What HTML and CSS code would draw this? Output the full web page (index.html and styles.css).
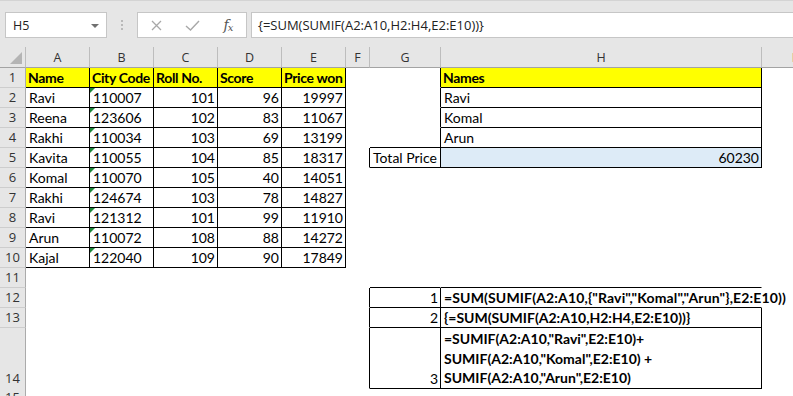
FILE: index.html
```html
<!DOCTYPE html>
<html lang="en">
<head>
    <meta charset="UTF-8">
    <title>SUMIF with multiple criteria</title>
    <link rel="stylesheet" href="styles.css">
</head>
<body>
    <!-- Formula bar -->
    <div class="toolbar">
        <div class="namebox">
            <span>H5</span>
            <svg class="caret" width="8" height="4" viewBox="0 0 8 4"><path d="M0 0h8L4 4z" fill="#707070"/></svg>
        </div>
        <div class="grip"><i></i><i></i><i></i></div>
        <div class="fxbox">
            <span class="slot">
                <svg width="11" height="11" viewBox="0 0 11 11"><path d="M1 1l9 9M10 1l-9 9" stroke="#a8a8a8" stroke-width="1.3" fill="none"/></svg>
            </span>
            <span class="slot">
                <svg width="15" height="11" viewBox="0 0 15 11"><path d="M1 6l4.5 4L14 1" stroke="#a8a8a8" stroke-width="1.4" fill="none"/></svg>
            </span>
            <span class="slot fx"><i>f<sub>x</sub></i></span>
        </div>
        <div class="formula">{=SUM(SUMIF(A2:A10,H2:H4,E2:E10))}</div>
    </div>

    <!-- Sheet -->
    <div class="sheet">
        <div class="row colhead">
            <div class="corner"></div>
            <div class="ch">A</div><div class="ch">B</div><div class="ch">C</div><div class="ch">D</div><div class="ch">E</div>
            <div class="ch">F</div><div class="ch">G</div><div class="ch">H</div><div class="ch">I</div>
        </div>

        <div class="row">
            <div class="rh">1</div>
            <div class="c b y h">Name</div><div class="c b y h">City Code</div><div class="c b y h">Roll No.</div>
            <div class="c b y h">Score</div><div class="c b y h">Price won</div>
            <div class="c"></div><div class="c br"></div><div class="c b y h">Names</div><div class="c"></div>
        </div>
        <div class="row">
            <div class="rh">2</div>
            <div class="c b">Ravi</div><div class="c b t">110007</div><div class="c b n">101</div>
            <div class="c b n">96</div><div class="c b n">19997</div>
            <div class="c"></div><div class="c br"></div><div class="c b">Ravi</div><div class="c"></div>
        </div>
        <div class="row">
            <div class="rh">3</div>
            <div class="c b">Reena</div><div class="c b t">123606</div><div class="c b n">102</div>
            <div class="c b n">83</div><div class="c b n">11067</div>
            <div class="c"></div><div class="c br"></div><div class="c b">Komal</div><div class="c"></div>
        </div>
        <div class="row">
            <div class="rh">4</div>
            <div class="c b">Rakhi</div><div class="c b t">110034</div><div class="c b n">103</div>
            <div class="c b n">69</div><div class="c b n">13199</div>
            <div class="c"></div><div class="c b"></div><div class="c b">Arun</div><div class="c"></div>
        </div>
        <div class="row">
            <div class="rh">5</div>
            <div class="c b">Kavita</div><div class="c b t">110055</div><div class="c b n">104</div>
            <div class="c b n">85</div><div class="c b n">18317</div>
            <div class="c br"></div><div class="c b">Total Price</div><div class="c b n blue">60230</div><div class="c"></div>
        </div>
        <div class="row">
            <div class="rh">6</div>
            <div class="c b">Komal</div><div class="c b t">110070</div><div class="c b n">105</div>
            <div class="c b n">40</div><div class="c b n">14051</div>
            <div class="c"></div><div class="c"></div><div class="c"></div><div class="c"></div>
        </div>
        <div class="row">
            <div class="rh">7</div>
            <div class="c b">Rakhi</div><div class="c b t">124674</div><div class="c b n">103</div>
            <div class="c b n">78</div><div class="c b n">14827</div>
            <div class="c"></div><div class="c"></div><div class="c"></div><div class="c"></div>
        </div>
        <div class="row">
            <div class="rh">8</div>
            <div class="c b">Ravi</div><div class="c b t">121312</div><div class="c b n">101</div>
            <div class="c b n">99</div><div class="c b n">11910</div>
            <div class="c"></div><div class="c"></div><div class="c"></div><div class="c"></div>
        </div>
        <div class="row">
            <div class="rh">9</div>
            <div class="c b">Arun</div><div class="c b t">110072</div><div class="c b n">108</div>
            <div class="c b n">88</div><div class="c b n">14272</div>
            <div class="c"></div><div class="c"></div><div class="c"></div><div class="c"></div>
        </div>
        <div class="row">
            <div class="rh">10</div>
            <div class="c b">Kajal</div><div class="c b t">122040</div><div class="c b n">109</div>
            <div class="c b n">90</div><div class="c b n">17849</div>
            <div class="c"></div><div class="c"></div><div class="c"></div><div class="c"></div>
        </div>
        <div class="row">
            <div class="rh">11</div>
            <div class="c"></div><div class="c"></div><div class="c"></div><div class="c"></div><div class="c"></div>
            <div class="c"></div><div class="c bb"></div><div class="c bb"></div><div class="c"></div>
        </div>
        <div class="row">
            <div class="rh">12</div>
            <div class="c"></div><div class="c"></div><div class="c"></div><div class="c"></div><div class="c"></div>
            <div class="c br"></div><div class="c b n">1</div>
            <div class="c bb h over">=SUM(SUMIF(A2:A10,{"Ravi","Komal","Arun"},E2:E10))</div><div class="c"></div>
        </div>
        <div class="row">
            <div class="rh">13</div>
            <div class="c"></div><div class="c"></div><div class="c"></div><div class="c"></div><div class="c"></div>
            <div class="c br"></div><div class="c b n">2</div>
            <div class="c b h">{=SUM(SUMIF(A2:A10,H2:H4,E2:E10))}</div><div class="c"></div>
        </div>
        <div class="row tall">
            <div class="rh">14</div>
            <div class="c"></div><div class="c"></div><div class="c"></div><div class="c"></div><div class="c"></div>
            <div class="c br"></div><div class="c b n">3</div>
            <div class="c b h wrap">=SUMIF(A2:A10,"Ravi",E2:E10)+<br>SUMIF(A2:A10,"Komal",E2:E10) +<br>SUMIF(A2:A10,"Arun",E2:E10)</div><div class="c"></div>
        </div>
        <div class="row">
            <div class="rh">15</div>
            <div class="c"></div><div class="c"></div><div class="c"></div><div class="c"></div><div class="c"></div>
            <div class="c"></div><div class="c"></div><div class="c"></div><div class="c"></div>
        </div>
    </div>
</body>
</html>
```

FILE: styles.css
```css
/* General page */
body {
    margin: 0;
    width: 793px;
    height: 396px;
    overflow: hidden;
    background: #ffffff;
    font-family: Lato, "Liberation Sans", sans-serif;
}

/* Formula bar */
.toolbar {
    height: 47px;
    box-sizing: border-box;
    border-top: 1px solid #d4d4d4;
    background: #e6e6e6;
    display: flex;
    align-items: flex-start;
    padding: 11px 0 0 5px;
    font-family: "Open Sans", "Noto Sans", sans-serif;
    font-size: 12.5px;
    color: #222;
}

.namebox {
    width: 102px;
    height: 26px;
    box-sizing: border-box;
    background: #fff;
    border: 1px solid #c6c6c6;
    display: flex;
    align-items: center;
    justify-content: space-between;
    padding: 0 7px 0 7px;
}

.caret {
    margin-top: 1px;
}

.grip {
    width: 30px;
    height: 26px;
    display: flex;
    flex-direction: column;
    align-items: center;
    justify-content: center;
    gap: 2px;
}

.grip i {
    width: 2px;
    height: 2px;
    background: #b9b9b9;
}

.fxbox {
    width: 110px;
    height: 26px;
    box-sizing: border-box;
    background: #fff;
    border: 1px solid #c6c6c6;
    display: flex;
}

.slot {
    width: 36px;
    display: flex;
    align-items: center;
    justify-content: center;
}

.fx i {
    font-family: "DejaVu Serif", "Liberation Serif", serif;
    font-size: 14px;
    color: #555;
    letter-spacing: -1px;
}

.fx sub {
    font-size: 10px;
    vertical-align: -1px;
}

.formula {
    flex: 1;
    height: 26px;
    box-sizing: border-box;
    margin-left: 4px;
    margin-right: -2px;
    background: #fff;
    border: 1px solid #c6c6c6;
    padding-left: 6px;
    font-size: 13px;
    line-height: 24px;
    white-space: nowrap;
}

/* Sheet grid */
.row {
    display: grid;
    grid-template-columns: 26px 64px 64px 64px 64px 64px 24px 71px 321px 64px;
    height: 20px;
}

.row.tall {
    height: 60px;
}

.colhead {
    height: 21px;
    background: #e6e6e6;
}

.ch {
    border-right: 1px solid #bdbdbd;
    border-bottom: 1px solid #a3a3a3;
    font-family: "Open Sans", "Noto Sans", sans-serif;
    font-size: 12.5px;
    color: #333;
    display: flex;
    align-items: center;
    justify-content: center;
    padding-top: 1px;
}

.corner {
    position: relative;
    border-right: 1px solid #bdbdbd;
    border-bottom: 1px solid #a3a3a3;
}

.corner::after {
    content: "";
    position: absolute;
    right: 3px;
    bottom: 3px;
    border-style: solid;
    border-width: 0 0 12px 12px;
    border-color: transparent transparent #b4b4b4 transparent;
}

.rh {
    background: #e6e6e6;
    border-right: 1px solid #ababab;
    border-bottom: 1px solid #cdcdcd;
    font-family: "Open Sans", "Noto Sans", sans-serif;
    font-size: 13px;
    color: #333;
    display: flex;
    align-items: flex-end;
    justify-content: center;
    line-height: 19px;
}

/* Cells */
.c {
    position: relative;
    border-right: 1px solid transparent;
    border-bottom: 1px solid transparent;
    font-size: 14px;
    line-height: 19px;
    color: #000;
    padding: 0 2px 0 3px;
    display: flex;
    align-items: flex-end;
    white-space: nowrap;
    min-width: 0;
}

.b {
    border-color: #000;
}

.br {
    border-right-color: #000;
}

.bb {
    border-bottom-color: #000;
}

.y {
    background: #ffff00;
    letter-spacing: -0.35px;
    padding-left: 2px;
}

.blue {
    background: #ddebf7;
}

.h {
    font-weight: bold;
}

.n {
    justify-content: flex-end;
}

.over {
    overflow: visible;
    letter-spacing: 0.15px;
}

.wrap {
    display: block;
    white-space: normal;
    padding-top: 1px;
    line-height: 19.5px;
}

/* Number stored as text marker */
.t::before {
    content: "";
    position: absolute;
    left: 0;
    top: 0;
    border-style: solid;
    border-width: 5px 5px 0 0;
    border-color: #1e8a3a transparent transparent transparent;
}
```
